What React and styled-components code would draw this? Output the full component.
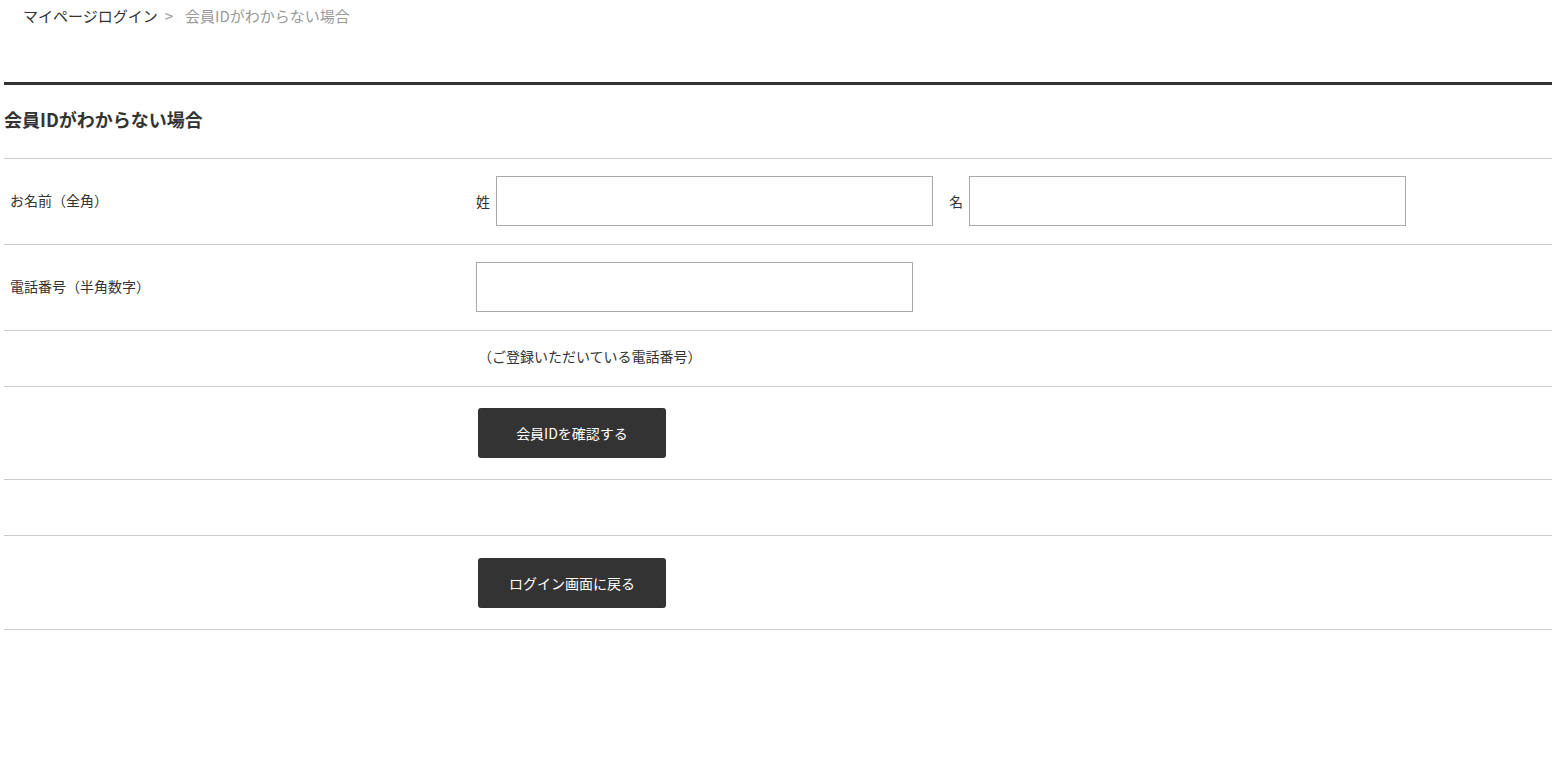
import styled, { createGlobalStyle } from "styled-components";

const GlobalStyle = createGlobalStyle`
  body {
    margin: 0;
    background: #fff;
    color: #333;
    font-family: "Noto Sans CJK JP", "Noto Sans", sans-serif;
  }
`;

const Page = styled.div`
  padding-left: 4px;
`;

const Breadcrumb = styled.nav`
  display: flex;
  align-items: flex-start;
  gap: 7px;
  padding: 5px 0 0 19px;
  height: 82px;
  box-sizing: border-box;
  font-size: 15px;
  line-height: 22px;
`;

const Crumb = styled.span`
  color: ${(p) => (p.$current ? "#999" : "#333")};
`;

const Sep = styled.span`
  color: #999;
  margin-right: 5px;
`;

const Section = styled.section`
  border-top: 3px solid #333;
`;

const Title = styled.h2`
  margin: 0;
  padding: 22px 0 26px;
  font-size: 18px;
  line-height: 25px;
  font-weight: 700;
  border-bottom: 1px solid #ccc;
`;

const Row = styled.div`
  display: grid;
  grid-template-columns: 472px 1fr;
  align-items: center;
  min-height: ${(p) => p.$min || 55}px;
  padding: ${(p) => p.$pad || "17px 0 18px"};
  box-sizing: border-box;
  border-bottom: 1px solid #ccc;
  font-size: 14px;
  line-height: 21px;
`;

const Label = styled.div`
  padding-left: 6px;
  margin-top: -2px;
`;

const Field = styled.div`
  display: flex;
  align-items: center;
`;

const FieldLabel = styled.span`
  margin-right: 6px;
  color: #333;
`;

const Input = styled.input`
  width: 437px;
  height: 50px;
  box-sizing: border-box;
  border: 1px solid #aaa;
  margin-right: ${(p) => p.$gap || 0}px;
  font-size: 14px;
  padding: 0 8px;
`;

const Note = styled.p`
  margin: 0 0 0 2px;
`;

const Button = styled.button`
  margin-left: 2px;
  width: 188px;
  height: 50px;
  border: none;
  border-radius: 3px;
  background: #333;
  color: #fff;
  font-family: inherit;
  font-size: 14px;
  cursor: pointer;
`;

export default function App() {
  return (
    <>
      <GlobalStyle />
      <Page>
        <Breadcrumb>
          <Crumb>マイページログイン</Crumb>
          <Sep>&gt;</Sep>
          <Crumb $current>会員IDがわからない場合</Crumb>
        </Breadcrumb>
        <Section>
          <Title>会員IDがわからない場合</Title>
          <Row>
            <Label>お名前（全角）</Label>
            <Field>
              <FieldLabel>姓</FieldLabel>
              <Input $gap={16} />
              <FieldLabel>名</FieldLabel>
              <Input />
            </Field>
          </Row>
          <Row>
            <Label>電話番号（半角数字）</Label>
            <Field>
              <Input />
            </Field>
          </Row>
          <Row $pad="15px 0 19px">
            <Label />
            <Note>（ご登録いただいている電話番号）</Note>
          </Row>
          <Row $pad="21px 0">
            <Label />
            <Field>
              <Button>会員IDを確認する</Button>
            </Field>
          </Row>
          <Row $min={56} />
          <Row $pad="22px 0 21px">
            <Label />
            <Field>
              <Button>ログイン画面に戻る</Button>
            </Field>
          </Row>
        </Section>
      </Page>
    </>
  );
}
